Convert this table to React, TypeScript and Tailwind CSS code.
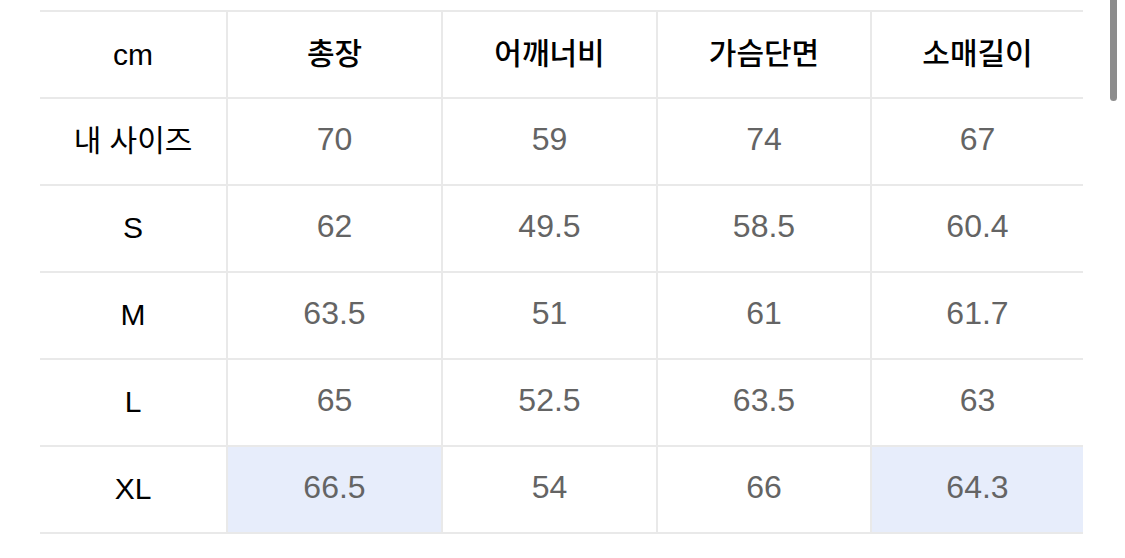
const headers = ["cm", "총장", "어깨너비", "가슴단면", "소매길이"]

const rows: { label: string; values: string[]; hl?: number[] }[] = [
    { label: "내 사이즈", values: ["70", "59", "74", "67"] },
    { label: "S", values: ["62", "49.5", "58.5", "60.4"] },
    { label: "M", values: ["63.5", "51", "61", "61.7"] },
    { label: "L", values: ["65", "52.5", "63.5", "63"] },
    { label: "XL", values: ["66.5", "54", "66", "64.3"], hl: [0, 3] },
]

const font = { fontFamily: '"Liberation Sans", "Noto Sans CJK KR", sans-serif' }

export default function App() {
    return (
        <div className="relative w-[1125px] h-[558px] bg-white overflow-hidden pt-[10px] pl-[40px]" style={font}>
            <div className="grid grid-cols-[186px_215px_215px_214px_213px] w-[1043px] border-b-2 border-[#e9e9e9]">
                {headers.map((h, i) => (
                    <div
                        key={h}
                        className={`h-[87px] flex items-center justify-center border-t-2 border-[#e9e9e9] text-[30px] font-medium text-black ${i > 0 ? "border-l-2 pb-[3px]" : ""}`}
                    >
                        {h}
                    </div>
                ))}
                {rows.map((r) => (
                    <>
                        <div key={r.label} className="h-[87px] flex items-center justify-center border-t-2 border-[#e9e9e9] text-[30px] text-black pb-[2px]">
                            {r.label}
                        </div>
                        {r.values.map((v, j) => (
                            <div
                                key={r.label + j}
                                className={`h-[87px] flex items-center justify-center border-t-2 border-l-2 border-[#e9e9e9] text-[32px] text-[#646464] pb-[5px] ${r.hl?.includes(j) ? "bg-[#e7edfb]" : "bg-white"}`}
                            >
                                {v}
                            </div>
                        ))}
                    </>
                ))}
            </div>

            {/* scrollbar */}
            <div className="absolute right-[8px] top-[-6px] w-[7px] h-[107px] rounded-full bg-[#8c8c8c]" />
        </div>
    )
}
